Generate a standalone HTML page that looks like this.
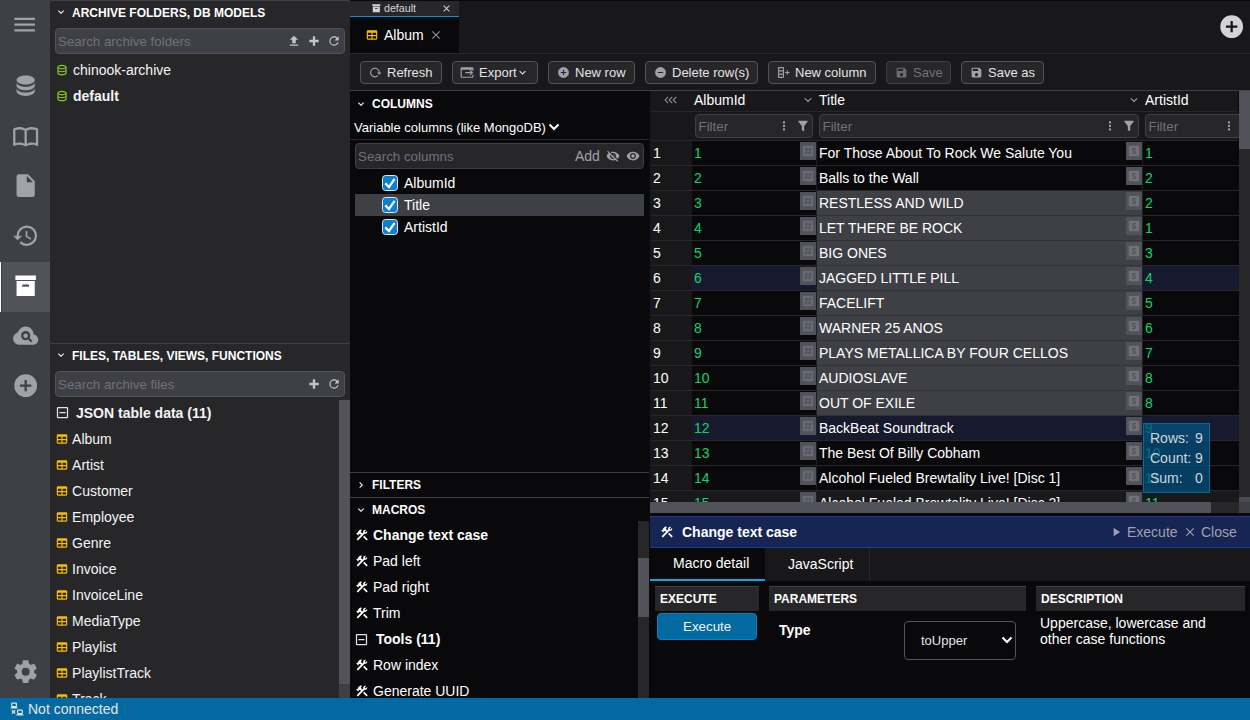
<!DOCTYPE html>
<html><head><meta charset="utf-8"><title>DbGate</title>
<style>
*{box-sizing:border-box;margin:0;padding:0}
html,body{width:1250px;height:720px;overflow:hidden;background:#09090b;color:#f4f4f5;font-family:"Liberation Sans",sans-serif;font-size:14px}
.a{position:absolute}
svg{display:block;position:absolute}
svg path{fill:currentColor}
#iconbar{left:0;top:0;width:50px;height:698px;background:#3f3f46;color:#a1a1aa}
#iconbar svg{width:27.33px;height:27.33px;left:12px}
#lp{left:50px;top:0;width:300px;height:698px;background:#27272a;overflow:hidden}
#status{left:0;top:698px;width:1250px;height:22px;background:#0369a1;color:#e4e4e7}
.wt svg{color:#fff}.wt{left:0;width:300px;height:25px;font-weight:bold;font-size:12px;color:#fff;text-transform:uppercase}
.wt span{position:absolute;left:22px;top:5.2px;white-space:nowrap}
.sb{left:5px;width:290px;height:26px;background:#3f3f46;border:1px solid #52525b;border-radius:4px;color:#71717a}
.sb span{position:absolute;left:2px;top:4.5px;white-space:nowrap;font-size:13.33px}
.ti{left:0;width:300px;height:26px;white-space:nowrap}
.ti span{position:absolute;left:23px;top:5px}
.t{white-space:nowrap}
</style></head><body>
<div class="a" id="iconbar">
<svg viewBox="0 0 24 24" style="top:10.8px;left:11.2px"><path d="M3,6H21V8H3V6M3,11H21V13H3V11M3,16H21V18H3V16Z"/></svg>
<svg viewBox="0 0 24 24" style="top:72.3px"><path d="M12,3C7.58,3 4,4.79 4,7C4,9.21 7.58,11 12,11C16.42,11 20,9.21 20,7C20,4.79 16.42,3 12,3M4,9V12C4,14.21 7.58,16 12,16C16.42,16 20,14.21 20,12V9C20,11.21 16.42,13 12,13C7.58,13 4,11.21 4,9M4,14V17C4,19.21 7.58,21 12,21C16.42,21 20,19.21 20,17V14C20,16.21 16.42,18 12,18C7.58,18 4,16.21 4,14Z"/></svg>
<svg viewBox="0 0 24 24" style="top:122.3px"><path d="M12 21.5C10.65 20.65 8.2 20 6.5 20C4.85 20 3.15 20.3 1.75 21.05C1.65 21.1 1.6 21.1 1.5 21.1C1.25 21.1 1 20.85 1 20.6V6C1.6 5.55 2.25 5.25 3 5C4.11 4.65 5.33 4.5 6.5 4.5C8.45 4.5 10.55 4.9 12 6C13.45 4.9 15.55 4.5 17.5 4.5C18.67 4.5 19.89 4.65 21 5C21.75 5.25 22.4 5.55 23 6V20.6C23 20.85 22.75 21.1 22.5 21.1C22.4 21.1 22.35 21.1 22.25 21.05C20.85 20.3 19.15 20 17.5 20C15.8 20 13.35 20.65 12 21.5M11 7.5C9.64 6.9 7.84 6.5 6.5 6.5C5.3 6.5 4.1 6.65 3 7V18.5C4.1 18.15 5.3 18 6.5 18C7.84 18 9.64 18.4 11 19V7.5M13 19C14.36 18.4 16.16 18 17.5 18C18.7 18 19.9 18.15 21 18.5V7C19.9 6.65 18.7 6.5 17.5 6.5C16.16 6.5 14.36 6.9 13 7.5V19Z"/></svg>
<svg viewBox="0 0 24 24" style="top:172.3px"><path d="M13,9V3.5L18.5,9M6,2C4.89,2 4,2.89 4,4V20A2,2 0 0,0 6,22H18A2,2 0 0,0 20,20V8L14,2H6Z"/></svg>
<svg viewBox="0 0 24 24" style="top:222.3px"><path d="M13.5,8H12V13L16.28,15.54L17,14.33L13.5,12.25V8M13,3A9,9 0 0,0 4,12H1L4.96,16.03L9,12H6A7,7 0 0,1 13,5A7,7 0 0,1 20,12A7,7 0 0,1 13,19C11.07,19 9.32,18.21 8.06,16.94L6.64,18.36C8.27,20 10.5,21 13,21A9,9 0 0,0 22,12A9,9 0 0,0 13,3"/></svg>
<div class="a" style="left:2px;top:262px;width:48px;height:50px;background:#52525b"></div><div class="a" style="left:0;top:262px;width:1px;height:50px;background:#fff"></div>
<svg viewBox="0 0 24 24" style="top:272.3px;color:#fff"><path d="M3,3H21V7H3V3M4,8H20V21H4V8M9.5,11A0.5,0.5 0 0,0 9,11.5V13H15V11.5A0.5,0.5 0 0,0 14.5,11H9.5Z"/></svg>
<svg viewBox="0 0 24 24" style="top:322.3px"><path d="M21.86 12.5C21.1 11.63 20.15 11.13 19 11C19 9.05 18.32 7.4 16.96 6.04C15.6 4.68 13.95 4 12 4C10.42 4 9 4.47 7.75 5.43S5.67 7.62 5.25 9.15C4 9.43 2.96 10.08 2.17 11.1S1 13.28 1 14.58C1 16.09 1.54 17.38 2.61 18.43C3.69 19.5 5 20 6.5 20H18.5C19.75 20 20.81 19.56 21.69 18.69C22.56 17.81 23 16.75 23 15.5C23 14.35 22.62 13.35 21.86 12.5M16.57 18L14 15.43C13.43 15.79 12.74 16 12 16C9.79 16 8 14.21 8 12S9.79 8 12 8 16 9.79 16 12C16 12.74 15.79 13.43 15.43 14L18 16.57L16.57 18M14 12C14 13.11 13.11 14 12 14S10 13.11 10 12 10.9 10 12 10 14 10.9 14 12Z"/></svg>
<svg viewBox="0 0 24 24" style="top:372.3px"><path d="M17,13H13V17H11V13H7V11H11V7H13V11H17M12,2A10,10 0 0,0 2,12A10,10 0 0,0 12,22A10,10 0 0,0 22,12A10,10 0 0,0 12,2Z"/></svg>
<svg viewBox="0 0 24 24" style="top:658.4px;left:11.8px"><path d="M12,15.5A3.5,3.5 0 0,1 8.5,12A3.5,3.5 0 0,1 12,8.5A3.5,3.5 0 0,1 15.5,12A3.5,3.5 0 0,1 12,15.5M19.43,12.97C19.47,12.65 19.5,12.33 19.5,12C19.5,11.67 19.47,11.34 19.43,11L21.54,9.37C21.73,9.22 21.78,8.95 21.66,8.73L19.66,5.27C19.54,5.05 19.27,4.96 19.05,5.05L16.56,6.05C16.04,5.66 15.5,5.32 14.87,5.07L14.5,2.42C14.46,2.18 14.25,2 14,2H10C9.75,2 9.54,2.18 9.5,2.42L9.13,5.07C8.5,5.32 7.96,5.66 7.44,6.05L4.95,5.05C4.73,4.96 4.46,5.05 4.34,5.27L2.34,8.73C2.21,8.95 2.27,9.22 2.46,9.37L4.57,11C4.53,11.34 4.5,11.67 4.5,12C4.5,12.33 4.53,12.65 4.57,12.97L2.46,14.63C2.27,14.78 2.21,15.05 2.34,15.27L4.34,18.73C4.46,18.95 4.73,19.03 4.95,18.95L7.44,17.94C7.96,18.34 8.5,18.68 9.13,18.93L9.5,21.58C9.54,21.82 9.75,22 10,22H14C14.25,22 14.46,21.82 14.5,21.58L14.87,18.93C15.5,18.67 16.04,18.34 16.56,17.94L19.05,18.95C19.27,19.03 19.54,18.95 19.66,18.73L21.66,15.27C21.78,15.05 21.73,14.78 21.54,14.63L19.43,12.97Z"/></svg>
</div>
<div class="a" id="lp">
<div class="a wt" style="top:0;border-top:1px solid #3f3f46"><svg viewBox="0 0 24 24" style="left:5px;top:5.1px;width:12px;height:12px"><path d="M7.41,8.58L12,13.17L16.59,8.58L18,10L12,16L6,10L7.41,8.58Z"/></svg><span>Archive folders, DB models</span></div>
<div class="a sb" style="top:28px"><span>Search archive folders</span><svg viewBox="0 0 24 24" style="left:231px;top:5px;width:14px;height:14px;color:#c4c4cc"><path d="M9,16V10H5L12,3L19,10H15V16H9M5,20V18H19V20H5Z"/></svg><svg viewBox="0 0 24 24" style="left:251px;top:5px;width:14px;height:14px;color:#c4c4cc"><path d="M20 14H14V20H10V14H4V10H10V4H14V10H20V14Z"/></svg><svg viewBox="0 0 24 24" style="left:271px;top:5px;width:14px;height:14px;color:#c4c4cc"><path d="M17.65,6.35C16.2,4.9 14.21,4 12,4A8,8 0 0,0 4,12A8,8 0 0,0 12,20C15.73,20 18.84,17.45 19.73,14H17.65C16.83,16.33 14.61,18 12,18A6,6 0 0,1 6,12A6,6 0 0,1 12,6C13.66,6 15.14,6.69 16.22,7.78L13,11H20V4L17.65,6.35Z"/></svg></div>
<div class="a ti" style="top:57px"><svg viewBox="0 0 24 24" style="left:4.6px;top:6px;width:14px;height:14px;color:#84cc16"><path d="M12 3C7.58 3 4 4.79 4 7V17C4 19.21 7.59 21 12 21S20 19.21 20 17V7C20 4.79 16.42 3 12 3M18 17C18 17.5 15.87 19 12 19S6 17.5 6 17V14.77C7.61 15.55 9.72 16 12 16S16.39 15.55 18 14.77V17M18 12.45C16.7 13.4 14.42 14 12 14C9.58 14 7.3 13.4 6 12.45V9.64C7.47 10.47 9.61 11 12 11C14.39 11 16.53 10.47 18 9.64V12.45M12 9C8.13 9 6 7.5 6 7S8.13 5 12 5C15.87 5 18 6.5 18 7S15.87 9 12 9Z"/></svg><span>chinook-archive</span></div>
<div class="a ti" style="top:83px;font-weight:bold"><svg viewBox="0 0 24 24" style="left:4.6px;top:6px;width:14px;height:14px;color:#84cc16"><path d="M12 3C7.58 3 4 4.79 4 7V17C4 19.21 7.59 21 12 21S20 19.21 20 17V7C20 4.79 16.42 3 12 3M18 17C18 17.5 15.87 19 12 19S6 17.5 6 17V14.77C7.61 15.55 9.72 16 12 16S16.39 15.55 18 14.77V17M18 12.45C16.7 13.4 14.42 14 12 14C9.58 14 7.3 13.4 6 12.45V9.64C7.47 10.47 9.61 11 12 11C14.39 11 16.53 10.47 18 9.64V12.45M12 9C8.13 9 6 7.5 6 7S8.13 5 12 5C15.87 5 18 6.5 18 7S15.87 9 12 9Z"/></svg><span>default</span></div>
<div class="a wt" style="top:343px;border-top:1px solid #3f3f46"><svg viewBox="0 0 24 24" style="left:5px;top:5.1px;width:12px;height:12px"><path d="M7.41,8.58L12,13.17L16.59,8.58L18,10L12,16L6,10L7.41,8.58Z"/></svg><span>Files, tables, views, functions</span></div>
<div class="a sb" style="top:371px"><span>Search archive files</span><svg viewBox="0 0 24 24" style="left:251px;top:5px;width:14px;height:14px;color:#c4c4cc"><path d="M20 14H14V20H10V14H4V10H10V4H14V10H20V14Z"/></svg><svg viewBox="0 0 24 24" style="left:271px;top:5px;width:14px;height:14px;color:#c4c4cc"><path d="M17.65,6.35C16.2,4.9 14.21,4 12,4A8,8 0 0,0 4,12A8,8 0 0,0 12,20C15.73,20 18.84,17.45 19.73,14H17.65C16.83,16.33 14.61,18 12,18A6,6 0 0,1 6,12A6,6 0 0,1 12,6C13.66,6 15.14,6.69 16.22,7.78L13,11H20V4L17.65,6.35Z"/></svg></div>
<div class="a ti" style="top:400px;font-weight:bold"><svg viewBox="0 0 24 24" style="left:4.6px;top:5.3px;width:15px;height:15px;color:#e4e4e7"><path d="M19,19V5H5V19H19M19,3A2,2 0 0,1 21,5V19A2,2 0 0,1 19,21H5A2,2 0 0,1 3,19V5C3,3.89 3.9,3 5,3H19M17,11V13H7V11H17Z"/></svg><span style="left:26px">JSON table data (11)</span></div>
<div class="a ti" style="top:426px"><svg viewBox="0 0 24 24" style="left:4.6px;top:6px;width:14px;height:14px;color:#fbbc05"><path d="M5,4H19A2,2 0 0,1 21,6V18A2,2 0 0,1 19,20H5A2,2 0 0,1 3,18V6A2,2 0 0,1 5,4M5,8V12H11V8H5M13,8V12H19V8H13M5,14V18H11V14H5M13,14V18H19V14H13Z"/></svg><span style="left:22.1px">Album</span></div>
<div class="a ti" style="top:452px"><svg viewBox="0 0 24 24" style="left:4.6px;top:6px;width:14px;height:14px;color:#fbbc05"><path d="M5,4H19A2,2 0 0,1 21,6V18A2,2 0 0,1 19,20H5A2,2 0 0,1 3,18V6A2,2 0 0,1 5,4M5,8V12H11V8H5M13,8V12H19V8H13M5,14V18H11V14H5M13,14V18H19V14H13Z"/></svg><span style="left:22.1px">Artist</span></div>
<div class="a ti" style="top:478px"><svg viewBox="0 0 24 24" style="left:4.6px;top:6px;width:14px;height:14px;color:#fbbc05"><path d="M5,4H19A2,2 0 0,1 21,6V18A2,2 0 0,1 19,20H5A2,2 0 0,1 3,18V6A2,2 0 0,1 5,4M5,8V12H11V8H5M13,8V12H19V8H13M5,14V18H11V14H5M13,14V18H19V14H13Z"/></svg><span style="left:22.1px">Customer</span></div>
<div class="a ti" style="top:504px"><svg viewBox="0 0 24 24" style="left:4.6px;top:6px;width:14px;height:14px;color:#fbbc05"><path d="M5,4H19A2,2 0 0,1 21,6V18A2,2 0 0,1 19,20H5A2,2 0 0,1 3,18V6A2,2 0 0,1 5,4M5,8V12H11V8H5M13,8V12H19V8H13M5,14V18H11V14H5M13,14V18H19V14H13Z"/></svg><span style="left:22.1px">Employee</span></div>
<div class="a ti" style="top:530px"><svg viewBox="0 0 24 24" style="left:4.6px;top:6px;width:14px;height:14px;color:#fbbc05"><path d="M5,4H19A2,2 0 0,1 21,6V18A2,2 0 0,1 19,20H5A2,2 0 0,1 3,18V6A2,2 0 0,1 5,4M5,8V12H11V8H5M13,8V12H19V8H13M5,14V18H11V14H5M13,14V18H19V14H13Z"/></svg><span style="left:22.1px">Genre</span></div>
<div class="a ti" style="top:556px"><svg viewBox="0 0 24 24" style="left:4.6px;top:6px;width:14px;height:14px;color:#fbbc05"><path d="M5,4H19A2,2 0 0,1 21,6V18A2,2 0 0,1 19,20H5A2,2 0 0,1 3,18V6A2,2 0 0,1 5,4M5,8V12H11V8H5M13,8V12H19V8H13M5,14V18H11V14H5M13,14V18H19V14H13Z"/></svg><span style="left:22.1px">Invoice</span></div>
<div class="a ti" style="top:582px"><svg viewBox="0 0 24 24" style="left:4.6px;top:6px;width:14px;height:14px;color:#fbbc05"><path d="M5,4H19A2,2 0 0,1 21,6V18A2,2 0 0,1 19,20H5A2,2 0 0,1 3,18V6A2,2 0 0,1 5,4M5,8V12H11V8H5M13,8V12H19V8H13M5,14V18H11V14H5M13,14V18H19V14H13Z"/></svg><span style="left:22.1px">InvoiceLine</span></div>
<div class="a ti" style="top:608px"><svg viewBox="0 0 24 24" style="left:4.6px;top:6px;width:14px;height:14px;color:#fbbc05"><path d="M5,4H19A2,2 0 0,1 21,6V18A2,2 0 0,1 19,20H5A2,2 0 0,1 3,18V6A2,2 0 0,1 5,4M5,8V12H11V8H5M13,8V12H19V8H13M5,14V18H11V14H5M13,14V18H19V14H13Z"/></svg><span style="left:22.1px">MediaType</span></div>
<div class="a ti" style="top:634px"><svg viewBox="0 0 24 24" style="left:4.6px;top:6px;width:14px;height:14px;color:#fbbc05"><path d="M5,4H19A2,2 0 0,1 21,6V18A2,2 0 0,1 19,20H5A2,2 0 0,1 3,18V6A2,2 0 0,1 5,4M5,8V12H11V8H5M13,8V12H19V8H13M5,14V18H11V14H5M13,14V18H19V14H13Z"/></svg><span style="left:22.1px">Playlist</span></div>
<div class="a ti" style="top:660px"><svg viewBox="0 0 24 24" style="left:4.6px;top:6px;width:14px;height:14px;color:#fbbc05"><path d="M5,4H19A2,2 0 0,1 21,6V18A2,2 0 0,1 19,20H5A2,2 0 0,1 3,18V6A2,2 0 0,1 5,4M5,8V12H11V8H5M13,8V12H19V8H13M5,14V18H11V14H5M13,14V18H19V14H13Z"/></svg><span style="left:22.1px">PlaylistTrack</span></div>
<div class="a ti" style="top:686px"><svg viewBox="0 0 24 24" style="left:4.6px;top:6px;width:14px;height:14px;color:#fbbc05"><path d="M5,4H19A2,2 0 0,1 21,6V18A2,2 0 0,1 19,20H5A2,2 0 0,1 3,18V6A2,2 0 0,1 5,4M5,8V12H11V8H5M13,8V12H19V8H13M5,14V18H11V14H5M13,14V18H19V14H13Z"/></svg><span style="left:22.1px">Track</span></div>
<div class="a" style="left:289px;top:400px;width:11px;height:298px;background:#3f3f46"></div><div class="a" style="left:289px;top:400px;width:11px;height:284px;background:#52525b"></div>
</div>
<!--MAINSTART-->
<div class="a" style="left:350px;top:0px;width:900px;height:53px;background:#18181b;border-top:1px solid #09090b"></div>
<div class="a" style="left:350px;top:1px;width:109px;height:14.5px;background:#27272a"></div>
<div class="a" style="left:350px;top:15.6px;width:109px;height:1.5px;background:#0c8ee0"></div>
<svg viewBox="0 0 24 24" style="left:371.1px;top:3.2px;width:10.67px;height:10.67px;color:#d4d4d8"><path d="M3,3H21V7H3V3M4,8H20V21H4V8M9.5,11A0.5,0.5 0 0,0 9,11.5V13H15V11.5A0.5,0.5 0 0,0 14.5,11H9.5Z"/></svg>
<span class="a t" style="left:384px;top:2px;font-size:10.67px;color:#d4d4d8">default</span>
<svg viewBox="0 0 24 24" style="left:441.1px;top:2.5px;width:11px;height:11px;color:#d4d4d8"><path d="M19,6.41L17.59,5L12,10.59L6.41,5L5,6.41L10.59,12L5,17.59L6.41,19L12,13.41L17.59,19L19,17.59L13.41,12L19,6.41Z"/></svg>
<div class="a" style="left:350px;top:17px;width:109px;height:36px;background:#09090b"></div>
<svg viewBox="0 0 24 24" style="left:365px;top:28px;width:14px;height:14px;color:#fbbc05"><path d="M5,4H19A2,2 0 0,1 21,6V18A2,2 0 0,1 19,20H5A2,2 0 0,1 3,18V6A2,2 0 0,1 5,4M5,8V12H11V8H5M13,8V12H19V8H13M5,14V18H11V14H5M13,14V18H19V14H13Z"/></svg>
<span class="a t" style="left:384px;top:27px;color:#fff">Album</span>
<svg viewBox="0 0 24 24" style="left:428.8px;top:28px;width:14px;height:14px;color:#8e8e98"><path d="M19,6.41L17.59,5L12,10.59L6.41,5L5,6.41L10.59,12L5,17.59L6.41,19L12,13.41L17.59,19L19,17.59L13.41,12L19,6.41Z"/></svg>
<svg viewBox="0 0 24 24" style="left:1217.8px;top:12.6px;width:27.33px;height:27.33px;color:#d4d4d8"><path d="M17,13H13V17H11V13H7V11H11V7H13V11H17M12,2A10,10 0 0,0 2,12A10,10 0 0,0 12,22A10,10 0 0,0 22,12A10,10 0 0,0 12,2Z"/></svg>
<div class="a" style="left:350px;top:53px;width:900px;height:38px;background:#18181b;border-top:1px solid #27272a;border-bottom:1px solid #3f3f46"></div>
<div class="a" style="left:360px;top:61px;width:82px;height:23px;background:#27272a;border:1px solid #52525b;border-radius:4px"></div><svg viewBox="0 0 24 24" style="left:368.8px;top:66px;width:13px;height:13px;color:#a1a1aa"><path d="M2 12C2 16.97 6.03 21 11 21C13.39 21 15.68 20.06 17.4 18.4L15.9 16.9C14.63 18.25 12.86 19 11 19C4.76 19 1.64 11.46 6.05 7.05C10.46 2.64 18 5.77 18 12H15L19 16H19.1L23 12H20C20 7.03 15.97 3 11 3C6.03 3 2 7.03 2 12Z"/></svg><span class="a t" style="left:387px;top:65px;font-size:13px;color:#e4e4e7">Refresh</span>
<div class="a" style="left:452px;top:61px;width:86px;height:23px;background:#27272a;border:1px solid #52525b;border-radius:4px"></div><span class="a t" style="left:479px;top:65px;font-size:13px;color:#e4e4e7">Export</span>
<svg viewBox="0 0 24 24" style="left:460.4px;top:64.7px;width:14px;height:14px;color:#a1a1aa"><path d="M9 12H18.8L16.3 9.5L17.7 8.1L22.6 13L17.7 17.9L16.3 16.5L18.8 14H9V12M21 17.4V20H3V8H21V8.6L23 10.6V6C23 4.9 22.1 4 21 4H3C1.9 4 1 4.9 1 6V20C1 21.1 1.9 22 3 22H21C22.1 22 23 21.1 23 20V15.4L21 17.4Z"/></svg>
<svg viewBox="0 0 24 24" style="left:516.1px;top:65.5px;width:13px;height:13px;color:#e4e4e7"><path d="M7.41,8.58L12,13.17L16.59,8.58L18,10L12,16L6,10L7.41,8.58Z"/></svg>
<div class="a" style="left:548px;top:61px;width:87px;height:23px;background:#27272a;border:1px solid #52525b;border-radius:4px"></div><svg viewBox="0 0 24 24" style="left:556.8px;top:66px;width:13px;height:13px;color:#a1a1aa"><path d="M17,13H13V17H11V13H7V11H11V7H13V11H17M12,2A10,10 0 0,0 2,12A10,10 0 0,0 12,22A10,10 0 0,0 22,12A10,10 0 0,0 12,2Z"/></svg><span class="a t" style="left:575px;top:65px;font-size:13px;color:#e4e4e7">New row</span>
<div class="a" style="left:645px;top:61px;width:113px;height:23px;background:#27272a;border:1px solid #52525b;border-radius:4px"></div><svg viewBox="0 0 24 24" style="left:653.8px;top:66px;width:13px;height:13px;color:#a1a1aa"><path d="M17,13H7V11H17M12,2A10,10 0 0,0 2,12A10,10 0 0,0 12,22A10,10 0 0,0 22,12A10,10 0 0,0 12,2Z"/></svg><span class="a t" style="left:672px;top:65px;font-size:13px;color:#e4e4e7">Delete row(s)</span>
<div class="a" style="left:768px;top:61px;width:108px;height:23px;background:#27272a;border:1px solid #52525b;border-radius:4px"></div><svg viewBox="0 0 24 24" style="left:776.8px;top:66px;width:13px;height:13px;color:#a1a1aa"><path d="M11,2A2,2 0 0,1 13,4V20A2,2 0 0,1 11,22H2V2H11M4,10V14H11V10H4M4,16V20H11V16H4M4,4V8H11V4H4M15,11H18V8H20V11H23V13H20V16H18V13H15V11Z"/></svg><span class="a t" style="left:795px;top:65px;font-size:13px;color:#e4e4e7">New column</span>
<div class="a" style="left:886px;top:61px;width:65px;height:23px;background:#27272a;border:1px solid #3f3f46;border-radius:4px"></div><svg viewBox="0 0 24 24" style="left:894.8px;top:66px;width:13px;height:13px;color:#6b6b75"><path d="M15,9H5V5H15M12,19A3,3 0 0,1 9,16A3,3 0 0,1 12,13A3,3 0 0,1 15,16A3,3 0 0,1 12,19M17,3H5C3.89,3 3,3.9 3,5V19A2,2 0 0,0 5,21H19A2,2 0 0,0 21,19V7L17,3Z"/></svg><span class="a t" style="left:913px;top:65px;font-size:13px;color:#71717a">Save</span>
<div class="a" style="left:961px;top:61px;width:83px;height:23px;background:#27272a;border:1px solid #52525b;border-radius:4px"></div><svg viewBox="0 0 24 24" style="left:969.8px;top:66px;width:13px;height:13px;color:#a1a1aa"><path d="M15,9H5V5H15M12,19A3,3 0 0,1 9,16A3,3 0 0,1 12,13A3,3 0 0,1 15,16A3,3 0 0,1 12,19M17,3H5C3.89,3 3,3.9 3,5V19A2,2 0 0,0 5,21H19A2,2 0 0,0 21,19V7L17,3Z"/></svg><span class="a t" style="left:988px;top:65px;font-size:13px;color:#e4e4e7">Save as</span>
<svg viewBox="0 0 24 24" style="left:355px;top:97.5px;width:12px;height:12px;color:#fff"><path d="M7.41,8.58L12,13.17L16.59,8.58L18,10L12,16L6,10L7.41,8.58Z"/></svg>
<span class="a t" style="left:372px;top:97px;font-size:12px;font-weight:bold;color:#fff">COLUMNS</span>
<span class="a t" style="left:354px;top:120px;font-size:13px;color:#fff">Variable columns (like MongoDB)</span>
<svg viewBox="0 0 12 8" style="left:548.2px;top:123px;width:12px;height:8px"><polyline points="1.5,1.5 6,6 10.5,1.5" style="fill:none;stroke:#fff;stroke-width:2"/></svg>
<div class="a" style="left:350px;top:139px;width:299px;height:1px;background:#27272a"></div>
<div class="a" style="left:355px;top:143px;width:289px;height:26px;background:#27272a;border:1px solid #3f3f46;border-radius:4px"></div>
<span class="a t" style="left:358px;top:149px;font-size:13.33px;color:#71717a">Search columns</span>
<span class="a t" style="left:575px;top:147.5px;font-size:14px;color:#a1a1aa">Add</span>
<svg viewBox="0 0 24 24" style="left:605.8px;top:149px;width:14px;height:14px;color:#a1a1aa"><path d="M11.83,9L15,12.16C15,12.11 15,12.05 15,12A3,3 0 0,0 12,9C11.94,9 11.89,9 11.83,9M7.53,9.8L9.08,11.35C9.03,11.56 9,11.77 9,12A3,3 0 0,0 12,15C12.22,15 12.44,14.97 12.65,14.92L14.2,16.47C13.53,16.8 12.79,17 12,17A5,5 0 0,1 7,12C7,11.21 7.2,10.47 7.53,9.8M2,4.27L4.28,6.55L4.73,7C3.08,8.3 1.78,10 1,12C2.73,16.39 7,19.5 12,19.5C13.55,19.5 15.03,19.2 16.38,18.66L16.81,19.08L19.73,22L21,20.73L3.27,3M12,7A5,5 0 0,1 17,12C17,12.64 16.87,13.26 16.64,13.82L19.57,16.75C21.07,15.5 22.27,13.86 23,12C21.27,7.61 17,4.5 12,4.5C10.6,4.5 9.26,4.75 8,5.2L10.17,7.35C10.74,7.13 11.35,7 12,7Z"/></svg>
<svg viewBox="0 0 24 24" style="left:626.1px;top:149px;width:14px;height:14px;color:#a1a1aa"><path d="M12,9A3,3 0 0,0 9,12A3,3 0 0,0 12,15A3,3 0 0,0 15,12A3,3 0 0,0 12,9M12,17A5,5 0 0,1 7,12A5,5 0 0,1 12,7A5,5 0 0,1 17,12A5,5 0 0,1 12,17M12,4.5C7,4.5 2.73,7.61 1,12C2.73,16.39 7,19.5 12,19.5C17,19.5 21.27,16.39 23,12C21.27,7.61 17,4.5 12,4.5Z"/></svg>
<div class="a" style="left:355px;top:194px;width:289px;height:22px;background:#3f3f46"></div>
<div class="a" style="left:382px;top:175px;width:16px;height:16px;background:#0c80d0;border:1.3px solid #e4e4e7;border-radius:3.5px"><svg viewBox="0 0 16 16" style="left:-1.3px;top:-1.3px;width:16px;height:16px"><polyline points="3.3,8.4 7,12.1 12.6,3.8" style="fill:none;stroke:#fff;stroke-width:2.2"/></svg></div>
<span class="a t" style="left:404px;top:175px;color:#fff">AlbumId</span>
<div class="a" style="left:382px;top:197px;width:16px;height:16px;background:#0c80d0;border:1.3px solid #e4e4e7;border-radius:3.5px"><svg viewBox="0 0 16 16" style="left:-1.3px;top:-1.3px;width:16px;height:16px"><polyline points="3.3,8.4 7,12.1 12.6,3.8" style="fill:none;stroke:#fff;stroke-width:2.2"/></svg></div>
<span class="a t" style="left:404px;top:197px;color:#fff">Title</span>
<div class="a" style="left:382px;top:219px;width:16px;height:16px;background:#0c80d0;border:1.3px solid #e4e4e7;border-radius:3.5px"><svg viewBox="0 0 16 16" style="left:-1.3px;top:-1.3px;width:16px;height:16px"><polyline points="3.3,8.4 7,12.1 12.6,3.8" style="fill:none;stroke:#fff;stroke-width:2.2"/></svg></div>
<span class="a t" style="left:404px;top:219px;color:#fff">ArtistId</span>
<div class="a" style="left:350px;top:472px;width:299px;height:1px;background:#3f3f46"></div>
<svg viewBox="0 0 24 24" style="left:355px;top:478.5px;width:12px;height:12px;color:#fff"><path d="M8.59,16.58L13.17,12L8.59,7.41L10,6L16,12L10,18L8.59,16.58Z"/></svg>
<span class="a t" style="left:372px;top:478px;font-size:12px;font-weight:bold;color:#fff">FILTERS</span>
<div class="a" style="left:350px;top:497px;width:299px;height:1px;background:#3f3f46"></div>
<svg viewBox="0 0 24 24" style="left:355px;top:503.5px;width:12px;height:12px;color:#fff"><path d="M7.41,8.58L12,13.17L16.59,8.58L18,10L12,16L6,10L7.41,8.58Z"/></svg>
<span class="a t" style="left:372px;top:503px;font-size:12px;font-weight:bold;color:#fff">MACROS</span>
<svg viewBox="0 0 24 24" style="left:355.2px;top:528px;width:14px;height:14px;color:#fff"><path d="M13.78 15.3L19.78 21.3L21.89 19.14L15.89 13.14L13.78 15.3M17.5 10.1C17.11 10.1 16.69 10.05 16.36 9.91L4.97 21.25L2.86 19.14L10.27 11.74L8.5 9.96L7.78 10.66L6.33 9.25V12.11L5.63 12.81L2.11 9.25L2.81 8.55H5.62L4.22 7.14L7.78 3.58C8.95 2.41 10.83 2.41 12 3.58L9.89 5.74L11.3 7.14L10.59 7.85L12.38 9.63L14.2 7.75C14.06 7.42 14 7 14 6.63C14 4.66 15.56 3.11 17.5 3.11C18.09 3.11 18.61 3.25 19.08 3.53L16.41 6.2L17.91 7.7L20.58 5.03C20.86 5.5 21 6 21 6.63C21 8.55 19.45 10.1 17.5 10.1Z"/></svg>
<span class="a t" style="left:373px;top:527px;color:#fff;font-weight:bold">Change text case</span>
<svg viewBox="0 0 24 24" style="left:355.2px;top:554px;width:14px;height:14px;color:#fff"><path d="M13.78 15.3L19.78 21.3L21.89 19.14L15.89 13.14L13.78 15.3M17.5 10.1C17.11 10.1 16.69 10.05 16.36 9.91L4.97 21.25L2.86 19.14L10.27 11.74L8.5 9.96L7.78 10.66L6.33 9.25V12.11L5.63 12.81L2.11 9.25L2.81 8.55H5.62L4.22 7.14L7.78 3.58C8.95 2.41 10.83 2.41 12 3.58L9.89 5.74L11.3 7.14L10.59 7.85L12.38 9.63L14.2 7.75C14.06 7.42 14 7 14 6.63C14 4.66 15.56 3.11 17.5 3.11C18.09 3.11 18.61 3.25 19.08 3.53L16.41 6.2L17.91 7.7L20.58 5.03C20.86 5.5 21 6 21 6.63C21 8.55 19.45 10.1 17.5 10.1Z"/></svg>
<span class="a t" style="left:373px;top:553px;color:#fff">Pad left</span>
<svg viewBox="0 0 24 24" style="left:355.2px;top:580px;width:14px;height:14px;color:#fff"><path d="M13.78 15.3L19.78 21.3L21.89 19.14L15.89 13.14L13.78 15.3M17.5 10.1C17.11 10.1 16.69 10.05 16.36 9.91L4.97 21.25L2.86 19.14L10.27 11.74L8.5 9.96L7.78 10.66L6.33 9.25V12.11L5.63 12.81L2.11 9.25L2.81 8.55H5.62L4.22 7.14L7.78 3.58C8.95 2.41 10.83 2.41 12 3.58L9.89 5.74L11.3 7.14L10.59 7.85L12.38 9.63L14.2 7.75C14.06 7.42 14 7 14 6.63C14 4.66 15.56 3.11 17.5 3.11C18.09 3.11 18.61 3.25 19.08 3.53L16.41 6.2L17.91 7.7L20.58 5.03C20.86 5.5 21 6 21 6.63C21 8.55 19.45 10.1 17.5 10.1Z"/></svg>
<span class="a t" style="left:373px;top:579px;color:#fff">Pad right</span>
<svg viewBox="0 0 24 24" style="left:355.2px;top:606px;width:14px;height:14px;color:#fff"><path d="M13.78 15.3L19.78 21.3L21.89 19.14L15.89 13.14L13.78 15.3M17.5 10.1C17.11 10.1 16.69 10.05 16.36 9.91L4.97 21.25L2.86 19.14L10.27 11.74L8.5 9.96L7.78 10.66L6.33 9.25V12.11L5.63 12.81L2.11 9.25L2.81 8.55H5.62L4.22 7.14L7.78 3.58C8.95 2.41 10.83 2.41 12 3.58L9.89 5.74L11.3 7.14L10.59 7.85L12.38 9.63L14.2 7.75C14.06 7.42 14 7 14 6.63C14 4.66 15.56 3.11 17.5 3.11C18.09 3.11 18.61 3.25 19.08 3.53L16.41 6.2L17.91 7.7L20.58 5.03C20.86 5.5 21 6 21 6.63C21 8.55 19.45 10.1 17.5 10.1Z"/></svg>
<span class="a t" style="left:373px;top:605px;color:#fff">Trim</span>
<svg viewBox="0 0 24 24" style="left:354.2px;top:631.5px;width:15px;height:15px;color:#e4e4e7"><path d="M19,19V5H5V19H19M19,3A2,2 0 0,1 21,5V19A2,2 0 0,1 19,21H5A2,2 0 0,1 3,19V5C3,3.89 3.9,3 5,3H19M17,11V13H7V11H17Z"/></svg>
<span class="a t" style="left:376px;top:631px;font-weight:bold;color:#fff">Tools (11)</span>
<svg viewBox="0 0 24 24" style="left:355.2px;top:658px;width:14px;height:14px;color:#fff"><path d="M13.78 15.3L19.78 21.3L21.89 19.14L15.89 13.14L13.78 15.3M17.5 10.1C17.11 10.1 16.69 10.05 16.36 9.91L4.97 21.25L2.86 19.14L10.27 11.74L8.5 9.96L7.78 10.66L6.33 9.25V12.11L5.63 12.81L2.11 9.25L2.81 8.55H5.62L4.22 7.14L7.78 3.58C8.95 2.41 10.83 2.41 12 3.58L9.89 5.74L11.3 7.14L10.59 7.85L12.38 9.63L14.2 7.75C14.06 7.42 14 7 14 6.63C14 4.66 15.56 3.11 17.5 3.11C18.09 3.11 18.61 3.25 19.08 3.53L16.41 6.2L17.91 7.7L20.58 5.03C20.86 5.5 21 6 21 6.63C21 8.55 19.45 10.1 17.5 10.1Z"/></svg>
<span class="a t" style="left:373px;top:657px;color:#fff">Row index</span>
<svg viewBox="0 0 24 24" style="left:355.2px;top:684px;width:14px;height:14px;color:#fff"><path d="M13.78 15.3L19.78 21.3L21.89 19.14L15.89 13.14L13.78 15.3M17.5 10.1C17.11 10.1 16.69 10.05 16.36 9.91L4.97 21.25L2.86 19.14L10.27 11.74L8.5 9.96L7.78 10.66L6.33 9.25V12.11L5.63 12.81L2.11 9.25L2.81 8.55H5.62L4.22 7.14L7.78 3.58C8.95 2.41 10.83 2.41 12 3.58L9.89 5.74L11.3 7.14L10.59 7.85L12.38 9.63L14.2 7.75C14.06 7.42 14 7 14 6.63C14 4.66 15.56 3.11 17.5 3.11C18.09 3.11 18.61 3.25 19.08 3.53L16.41 6.2L17.91 7.7L20.58 5.03C20.86 5.5 21 6 21 6.63C21 8.55 19.45 10.1 17.5 10.1Z"/></svg>
<span class="a t" style="left:373px;top:683px;color:#fff">Generate UUID</span>
<div class="a" style="left:638px;top:521px;width:11px;height:177px;background:#27272a"></div>
<div class="a" style="left:638px;top:557.5px;width:11px;height:59.5px;background:#52525b"></div>
<div class="a" style="left:650px;top:91px;width:588px;height:21px;background:#18181b;border-bottom:1px solid #27272a"></div>
<div class="a" style="left:650px;top:112px;width:588px;height:29px;background:#18181b;border-bottom:1px solid #27272a"></div>
<svg viewBox="0 0 24 24" style="left:663.8px;top:92.6px;width:14px;height:14px;color:#8a8a94"><path d="M6.41,6L0.41,12L6.41,18L7.82,16.59L3.24,12L7.82,7.41L6.41,6M13.41,6L7.41,12L13.41,18L14.82,16.59L10.24,12L14.82,7.41L13.41,6M20.41,6L14.41,12L20.41,18L21.82,16.59L17.24,12L21.82,7.41L20.41,6Z"/></svg>
<span class="a t" style="left:694px;top:92px;color:#fff">AlbumId</span>
<svg viewBox="0 0 24 24" style="left:801.2px;top:93px;width:14px;height:14px;color:#a1a1aa"><path d="M7.41,8.58L12,13.17L16.59,8.58L18,10L12,16L6,10L7.41,8.58Z"/></svg>
<div class="a" style="left:695px;top:114px;width:118px;height:24px;background:#27272a;border:1px solid #3f3f46;border-radius:4px"></div>
<span class="a t" style="left:698.5px;top:119px;font-size:13.33px;color:#71717a">Filter</span>
<span class="a t" style="left:819px;top:92px;color:#fff">Title</span>
<svg viewBox="0 0 24 24" style="left:1126.9px;top:93px;width:14px;height:14px;color:#a1a1aa"><path d="M7.41,8.58L12,13.17L16.59,8.58L18,10L12,16L6,10L7.41,8.58Z"/></svg>
<div class="a" style="left:819px;top:114px;width:320px;height:24px;background:#27272a;border:1px solid #3f3f46;border-radius:4px"></div>
<span class="a t" style="left:822.5px;top:119px;font-size:13.33px;color:#71717a">Filter</span>
<span class="a t" style="left:1145px;top:92px;color:#fff">ArtistId</span>
<div class="a" style="left:1145px;top:114px;width:100px;height:24px;background:#27272a;border:1px solid #3f3f46;border-radius:4px"></div>
<span class="a t" style="left:1148.5px;top:119px;font-size:13.33px;color:#71717a">Filter</span>
<svg viewBox="0 0 24 24" style="left:777.4px;top:119px;width:14px;height:14px;color:#a1a1aa"><path d="M12,16A2,2 0 0,1 14,18A2,2 0 0,1 12,20A2,2 0 0,1 10,18A2,2 0 0,1 12,16M12,10A2,2 0 0,1 14,12A2,2 0 0,1 12,14A2,2 0 0,1 10,12A2,2 0 0,1 12,10M12,4A2,2 0 0,1 14,6A2,2 0 0,1 12,8A2,2 0 0,1 10,6A2,2 0 0,1 12,4Z"/></svg>
<svg viewBox="0 0 24 24" style="left:795.6px;top:119px;width:14px;height:14px;color:#a1a1aa"><path d="M14,12V19.88C14.04,20.18 13.94,20.5 13.71,20.71C13.32,21.1 12.69,21.1 12.3,20.71L10.29,18.7C10.06,18.47 9.96,18.16 10,17.87V12H9.97L4.21,4.62C3.87,4.19 3.95,3.56 4.38,3.22C4.57,3.08 4.78,3 5,3V3H19V3C19.22,3 19.43,3.08 19.62,3.22C20.05,3.56 20.13,4.19 19.79,4.62L14.03,12H14Z"/></svg>
<svg viewBox="0 0 24 24" style="left:1103.3px;top:119px;width:14px;height:14px;color:#a1a1aa"><path d="M12,16A2,2 0 0,1 14,18A2,2 0 0,1 12,20A2,2 0 0,1 10,18A2,2 0 0,1 12,16M12,10A2,2 0 0,1 14,12A2,2 0 0,1 12,14A2,2 0 0,1 10,12A2,2 0 0,1 12,10M12,4A2,2 0 0,1 14,6A2,2 0 0,1 12,8A2,2 0 0,1 10,6A2,2 0 0,1 12,4Z"/></svg>
<svg viewBox="0 0 24 24" style="left:1121.9px;top:119px;width:14px;height:14px;color:#a1a1aa"><path d="M14,12V19.88C14.04,20.18 13.94,20.5 13.71,20.71C13.32,21.1 12.69,21.1 12.3,20.71L10.29,18.7C10.06,18.47 9.96,18.16 10,17.87V12H9.97L4.21,4.62C3.87,4.19 3.95,3.56 4.38,3.22C4.57,3.08 4.78,3 5,3V3H19V3C19.22,3 19.43,3.08 19.62,3.22C20.05,3.56 20.13,4.19 19.79,4.62L14.03,12H14Z"/></svg>
<svg viewBox="0 0 24 24" style="left:1221.9px;top:119px;width:14px;height:14px;color:#a1a1aa"><path d="M12,16A2,2 0 0,1 14,18A2,2 0 0,1 12,20A2,2 0 0,1 10,18A2,2 0 0,1 12,16M12,10A2,2 0 0,1 14,12A2,2 0 0,1 12,14A2,2 0 0,1 10,12A2,2 0 0,1 12,10M12,4A2,2 0 0,1 14,6A2,2 0 0,1 12,8A2,2 0 0,1 10,6A2,2 0 0,1 12,4Z"/></svg>
<div class="a" style="left:650px;top:141px;width:42px;height:25px;background:#18181b;border-bottom:1px solid #27272a"></div>
<span class="a t" style="left:653px;top:145px;color:#fff">1</span>
<div class="a" style="left:692px;top:141px;width:125px;height:25px;background:#09090b;border-bottom:1px solid #27272a;border-right:1px solid #1f1f23"></div>
<span class="a t" style="left:694px;top:145px;color:#10d468">1</span>
<div class="a" style="left:800px;top:142px;width:16px;height:18px;background:#52525b"><svg viewBox="0 0 24 24" style="left:1px;top:1.6px;width:14px;height:14px;color:#6a6a74"><path d="M3,5A2,2 0 0,1 5,3H19A2,2 0 0,1 21,5V19A2,2 0 0,1 19,21H5C3.89,21 3,20.1 3,19V5M7,18H9L9.35,16H13.35L13,18H15L15.35,16H17.35L17.71,14H15.71L16.41,10H18.41L18.76,8H16.76L17.12,6H15.12L14.76,8H10.76L11.12,6H9.12L8.76,8H6.76L6.41,10H8.41L7.71,14H5.71L5.35,16H7.35L7,18M10.41,10H14.41L13.71,14H9.71L10.41,10Z"/></svg></div>
<div class="a" style="left:817px;top:141px;width:326px;height:25px;background:#09090b;border-bottom:1px solid #27272a;border-right:1px solid #1f1f23"></div>
<span class="a t" style="left:819px;top:145px;color:#fff">For Those About To Rock We Salute You</span>
<div class="a" style="left:1126px;top:142px;width:16px;height:18px;background:#52525b"><svg viewBox="0 0 24 24" style="left:0.9px;top:1.6px;width:14px;height:14px;color:#71717a"><path d="M11,7A2,2 0 0,0 9,9V11A2,2 0 0,0 11,13H13V15H9V17H13A2,2 0 0,0 15,15V13A2,2 0 0,0 13,11H11V9H15V7H11M5,3H19A2,2 0 0,1 21,5V19A2,2 0 0,1 19,21H5A2,2 0 0,1 3,19V5A2,2 0 0,1 5,3Z"/></svg></div>
<div class="a" style="left:1143px;top:141px;width:95.8px;height:25px;background:#09090b;border-bottom:1px solid #27272a"></div>
<span class="a t" style="left:1145px;top:145px;color:#10d468">1</span>
<div class="a" style="left:650px;top:166px;width:42px;height:25px;background:#18181b;border-bottom:1px solid #27272a"></div>
<span class="a t" style="left:653px;top:170px;color:#fff">2</span>
<div class="a" style="left:692px;top:166px;width:125px;height:25px;background:#09090b;border-bottom:1px solid #27272a;border-right:1px solid #1f1f23"></div>
<span class="a t" style="left:694px;top:170px;color:#10d468">2</span>
<div class="a" style="left:800px;top:167px;width:16px;height:18px;background:#52525b"><svg viewBox="0 0 24 24" style="left:1px;top:1.6px;width:14px;height:14px;color:#6a6a74"><path d="M3,5A2,2 0 0,1 5,3H19A2,2 0 0,1 21,5V19A2,2 0 0,1 19,21H5C3.89,21 3,20.1 3,19V5M7,18H9L9.35,16H13.35L13,18H15L15.35,16H17.35L17.71,14H15.71L16.41,10H18.41L18.76,8H16.76L17.12,6H15.12L14.76,8H10.76L11.12,6H9.12L8.76,8H6.76L6.41,10H8.41L7.71,14H5.71L5.35,16H7.35L7,18M10.41,10H14.41L13.71,14H9.71L10.41,10Z"/></svg></div>
<div class="a" style="left:817px;top:166px;width:326px;height:25px;background:#09090b;border-bottom:1px solid #27272a;border-right:1px solid #1f1f23"></div>
<span class="a t" style="left:819px;top:170px;color:#fff">Balls to the Wall</span>
<div class="a" style="left:1126px;top:167px;width:16px;height:18px;background:#52525b"><svg viewBox="0 0 24 24" style="left:0.9px;top:1.6px;width:14px;height:14px;color:#71717a"><path d="M11,7A2,2 0 0,0 9,9V11A2,2 0 0,0 11,13H13V15H9V17H13A2,2 0 0,0 15,15V13A2,2 0 0,0 13,11H11V9H15V7H11M5,3H19A2,2 0 0,1 21,5V19A2,2 0 0,1 19,21H5A2,2 0 0,1 3,19V5A2,2 0 0,1 5,3Z"/></svg></div>
<div class="a" style="left:1143px;top:166px;width:95.8px;height:25px;background:#09090b;border-bottom:1px solid #27272a"></div>
<span class="a t" style="left:1145px;top:170px;color:#10d468">2</span>
<div class="a" style="left:650px;top:191px;width:42px;height:25px;background:#18181b;border-bottom:1px solid #27272a"></div>
<span class="a t" style="left:653px;top:195px;color:#fff">3</span>
<div class="a" style="left:692px;top:191px;width:125px;height:25px;background:#09090b;border-bottom:1px solid #27272a;border-right:1px solid #1f1f23"></div>
<span class="a t" style="left:694px;top:195px;color:#10d468">3</span>
<div class="a" style="left:800px;top:192px;width:16px;height:18px;background:#52525b"><svg viewBox="0 0 24 24" style="left:1px;top:1.6px;width:14px;height:14px;color:#6a6a74"><path d="M3,5A2,2 0 0,1 5,3H19A2,2 0 0,1 21,5V19A2,2 0 0,1 19,21H5C3.89,21 3,20.1 3,19V5M7,18H9L9.35,16H13.35L13,18H15L15.35,16H17.35L17.71,14H15.71L16.41,10H18.41L18.76,8H16.76L17.12,6H15.12L14.76,8H10.76L11.12,6H9.12L8.76,8H6.76L6.41,10H8.41L7.71,14H5.71L5.35,16H7.35L7,18M10.41,10H14.41L13.71,14H9.71L10.41,10Z"/></svg></div>
<div class="a" style="left:817px;top:191px;width:326px;height:25px;background:#3f3f46;border-bottom:1px solid #323238;border-right:1px solid #1f1f23"></div>
<span class="a t" style="left:819px;top:195px;color:#fff">RESTLESS AND WILD</span>
<div class="a" style="left:1126px;top:192px;width:16px;height:18px;background:#52525b"><svg viewBox="0 0 24 24" style="left:0.9px;top:1.6px;width:14px;height:14px;color:#71717a"><path d="M11,7A2,2 0 0,0 9,9V11A2,2 0 0,0 11,13H13V15H9V17H13A2,2 0 0,0 15,15V13A2,2 0 0,0 13,11H11V9H15V7H11M5,3H19A2,2 0 0,1 21,5V19A2,2 0 0,1 19,21H5A2,2 0 0,1 3,19V5A2,2 0 0,1 5,3Z"/></svg></div>
<div class="a" style="left:1143px;top:191px;width:95.8px;height:25px;background:#09090b;border-bottom:1px solid #27272a"></div>
<span class="a t" style="left:1145px;top:195px;color:#10d468">2</span>
<div class="a" style="left:650px;top:216px;width:42px;height:25px;background:#18181b;border-bottom:1px solid #27272a"></div>
<span class="a t" style="left:653px;top:220px;color:#fff">4</span>
<div class="a" style="left:692px;top:216px;width:125px;height:25px;background:#09090b;border-bottom:1px solid #27272a;border-right:1px solid #1f1f23"></div>
<span class="a t" style="left:694px;top:220px;color:#10d468">4</span>
<div class="a" style="left:800px;top:217px;width:16px;height:18px;background:#52525b"><svg viewBox="0 0 24 24" style="left:1px;top:1.6px;width:14px;height:14px;color:#6a6a74"><path d="M3,5A2,2 0 0,1 5,3H19A2,2 0 0,1 21,5V19A2,2 0 0,1 19,21H5C3.89,21 3,20.1 3,19V5M7,18H9L9.35,16H13.35L13,18H15L15.35,16H17.35L17.71,14H15.71L16.41,10H18.41L18.76,8H16.76L17.12,6H15.12L14.76,8H10.76L11.12,6H9.12L8.76,8H6.76L6.41,10H8.41L7.71,14H5.71L5.35,16H7.35L7,18M10.41,10H14.41L13.71,14H9.71L10.41,10Z"/></svg></div>
<div class="a" style="left:817px;top:216px;width:326px;height:25px;background:#3f3f46;border-bottom:1px solid #323238;border-right:1px solid #1f1f23"></div>
<span class="a t" style="left:819px;top:220px;color:#fff">LET THERE BE ROCK</span>
<div class="a" style="left:1126px;top:217px;width:16px;height:18px;background:#52525b"><svg viewBox="0 0 24 24" style="left:0.9px;top:1.6px;width:14px;height:14px;color:#71717a"><path d="M11,7A2,2 0 0,0 9,9V11A2,2 0 0,0 11,13H13V15H9V17H13A2,2 0 0,0 15,15V13A2,2 0 0,0 13,11H11V9H15V7H11M5,3H19A2,2 0 0,1 21,5V19A2,2 0 0,1 19,21H5A2,2 0 0,1 3,19V5A2,2 0 0,1 5,3Z"/></svg></div>
<div class="a" style="left:1143px;top:216px;width:95.8px;height:25px;background:#09090b;border-bottom:1px solid #27272a"></div>
<span class="a t" style="left:1145px;top:220px;color:#10d468">1</span>
<div class="a" style="left:650px;top:241px;width:42px;height:25px;background:#18181b;border-bottom:1px solid #27272a"></div>
<span class="a t" style="left:653px;top:245px;color:#fff">5</span>
<div class="a" style="left:692px;top:241px;width:125px;height:25px;background:#09090b;border-bottom:1px solid #27272a;border-right:1px solid #1f1f23"></div>
<span class="a t" style="left:694px;top:245px;color:#10d468">5</span>
<div class="a" style="left:800px;top:242px;width:16px;height:18px;background:#52525b"><svg viewBox="0 0 24 24" style="left:1px;top:1.6px;width:14px;height:14px;color:#6a6a74"><path d="M3,5A2,2 0 0,1 5,3H19A2,2 0 0,1 21,5V19A2,2 0 0,1 19,21H5C3.89,21 3,20.1 3,19V5M7,18H9L9.35,16H13.35L13,18H15L15.35,16H17.35L17.71,14H15.71L16.41,10H18.41L18.76,8H16.76L17.12,6H15.12L14.76,8H10.76L11.12,6H9.12L8.76,8H6.76L6.41,10H8.41L7.71,14H5.71L5.35,16H7.35L7,18M10.41,10H14.41L13.71,14H9.71L10.41,10Z"/></svg></div>
<div class="a" style="left:817px;top:241px;width:326px;height:25px;background:#3f3f46;border-bottom:1px solid #323238;border-right:1px solid #1f1f23"></div>
<span class="a t" style="left:819px;top:245px;color:#fff">BIG ONES</span>
<div class="a" style="left:1126px;top:242px;width:16px;height:18px;background:#52525b"><svg viewBox="0 0 24 24" style="left:0.9px;top:1.6px;width:14px;height:14px;color:#71717a"><path d="M11,7A2,2 0 0,0 9,9V11A2,2 0 0,0 11,13H13V15H9V17H13A2,2 0 0,0 15,15V13A2,2 0 0,0 13,11H11V9H15V7H11M5,3H19A2,2 0 0,1 21,5V19A2,2 0 0,1 19,21H5A2,2 0 0,1 3,19V5A2,2 0 0,1 5,3Z"/></svg></div>
<div class="a" style="left:1143px;top:241px;width:95.8px;height:25px;background:#09090b;border-bottom:1px solid #27272a"></div>
<span class="a t" style="left:1145px;top:245px;color:#10d468">3</span>
<div class="a" style="left:650px;top:266px;width:42px;height:25px;background:#18181b;border-bottom:1px solid #27272a"></div>
<span class="a t" style="left:653px;top:270px;color:#fff">6</span>
<div class="a" style="left:692px;top:266px;width:125px;height:25px;background:#17192e;border-bottom:1px solid #27272a;border-right:1px solid #1f1f23"></div>
<span class="a t" style="left:694px;top:270px;color:#10d468">6</span>
<div class="a" style="left:800px;top:267px;width:16px;height:18px;background:#52525b"><svg viewBox="0 0 24 24" style="left:1px;top:1.6px;width:14px;height:14px;color:#6a6a74"><path d="M3,5A2,2 0 0,1 5,3H19A2,2 0 0,1 21,5V19A2,2 0 0,1 19,21H5C3.89,21 3,20.1 3,19V5M7,18H9L9.35,16H13.35L13,18H15L15.35,16H17.35L17.71,14H15.71L16.41,10H18.41L18.76,8H16.76L17.12,6H15.12L14.76,8H10.76L11.12,6H9.12L8.76,8H6.76L6.41,10H8.41L7.71,14H5.71L5.35,16H7.35L7,18M10.41,10H14.41L13.71,14H9.71L10.41,10Z"/></svg></div>
<div class="a" style="left:817px;top:266px;width:326px;height:25px;background:#3f3f46;border-bottom:1px solid #323238;border-right:1px solid #1f1f23"></div>
<span class="a t" style="left:819px;top:270px;color:#fff">JAGGED LITTLE PILL</span>
<div class="a" style="left:1126px;top:267px;width:16px;height:18px;background:#52525b"><svg viewBox="0 0 24 24" style="left:0.9px;top:1.6px;width:14px;height:14px;color:#71717a"><path d="M11,7A2,2 0 0,0 9,9V11A2,2 0 0,0 11,13H13V15H9V17H13A2,2 0 0,0 15,15V13A2,2 0 0,0 13,11H11V9H15V7H11M5,3H19A2,2 0 0,1 21,5V19A2,2 0 0,1 19,21H5A2,2 0 0,1 3,19V5A2,2 0 0,1 5,3Z"/></svg></div>
<div class="a" style="left:1143px;top:266px;width:95.8px;height:25px;background:#17192e;border-bottom:1px solid #27272a"></div>
<span class="a t" style="left:1145px;top:270px;color:#10d468">4</span>
<div class="a" style="left:650px;top:291px;width:42px;height:25px;background:#18181b;border-bottom:1px solid #27272a"></div>
<span class="a t" style="left:653px;top:295px;color:#fff">7</span>
<div class="a" style="left:692px;top:291px;width:125px;height:25px;background:#09090b;border-bottom:1px solid #27272a;border-right:1px solid #1f1f23"></div>
<span class="a t" style="left:694px;top:295px;color:#10d468">7</span>
<div class="a" style="left:800px;top:292px;width:16px;height:18px;background:#52525b"><svg viewBox="0 0 24 24" style="left:1px;top:1.6px;width:14px;height:14px;color:#6a6a74"><path d="M3,5A2,2 0 0,1 5,3H19A2,2 0 0,1 21,5V19A2,2 0 0,1 19,21H5C3.89,21 3,20.1 3,19V5M7,18H9L9.35,16H13.35L13,18H15L15.35,16H17.35L17.71,14H15.71L16.41,10H18.41L18.76,8H16.76L17.12,6H15.12L14.76,8H10.76L11.12,6H9.12L8.76,8H6.76L6.41,10H8.41L7.71,14H5.71L5.35,16H7.35L7,18M10.41,10H14.41L13.71,14H9.71L10.41,10Z"/></svg></div>
<div class="a" style="left:817px;top:291px;width:326px;height:25px;background:#3f3f46;border-bottom:1px solid #323238;border-right:1px solid #1f1f23"></div>
<span class="a t" style="left:819px;top:295px;color:#fff">FACELIFT</span>
<div class="a" style="left:1126px;top:292px;width:16px;height:18px;background:#52525b"><svg viewBox="0 0 24 24" style="left:0.9px;top:1.6px;width:14px;height:14px;color:#71717a"><path d="M11,7A2,2 0 0,0 9,9V11A2,2 0 0,0 11,13H13V15H9V17H13A2,2 0 0,0 15,15V13A2,2 0 0,0 13,11H11V9H15V7H11M5,3H19A2,2 0 0,1 21,5V19A2,2 0 0,1 19,21H5A2,2 0 0,1 3,19V5A2,2 0 0,1 5,3Z"/></svg></div>
<div class="a" style="left:1143px;top:291px;width:95.8px;height:25px;background:#09090b;border-bottom:1px solid #27272a"></div>
<span class="a t" style="left:1145px;top:295px;color:#10d468">5</span>
<div class="a" style="left:650px;top:316px;width:42px;height:25px;background:#18181b;border-bottom:1px solid #27272a"></div>
<span class="a t" style="left:653px;top:320px;color:#fff">8</span>
<div class="a" style="left:692px;top:316px;width:125px;height:25px;background:#09090b;border-bottom:1px solid #27272a;border-right:1px solid #1f1f23"></div>
<span class="a t" style="left:694px;top:320px;color:#10d468">8</span>
<div class="a" style="left:800px;top:317px;width:16px;height:18px;background:#52525b"><svg viewBox="0 0 24 24" style="left:1px;top:1.6px;width:14px;height:14px;color:#6a6a74"><path d="M3,5A2,2 0 0,1 5,3H19A2,2 0 0,1 21,5V19A2,2 0 0,1 19,21H5C3.89,21 3,20.1 3,19V5M7,18H9L9.35,16H13.35L13,18H15L15.35,16H17.35L17.71,14H15.71L16.41,10H18.41L18.76,8H16.76L17.12,6H15.12L14.76,8H10.76L11.12,6H9.12L8.76,8H6.76L6.41,10H8.41L7.71,14H5.71L5.35,16H7.35L7,18M10.41,10H14.41L13.71,14H9.71L10.41,10Z"/></svg></div>
<div class="a" style="left:817px;top:316px;width:326px;height:25px;background:#3f3f46;border-bottom:1px solid #323238;border-right:1px solid #1f1f23"></div>
<span class="a t" style="left:819px;top:320px;color:#fff">WARNER 25 ANOS</span>
<div class="a" style="left:1126px;top:317px;width:16px;height:18px;background:#52525b"><svg viewBox="0 0 24 24" style="left:0.9px;top:1.6px;width:14px;height:14px;color:#71717a"><path d="M11,7A2,2 0 0,0 9,9V11A2,2 0 0,0 11,13H13V15H9V17H13A2,2 0 0,0 15,15V13A2,2 0 0,0 13,11H11V9H15V7H11M5,3H19A2,2 0 0,1 21,5V19A2,2 0 0,1 19,21H5A2,2 0 0,1 3,19V5A2,2 0 0,1 5,3Z"/></svg></div>
<div class="a" style="left:1143px;top:316px;width:95.8px;height:25px;background:#09090b;border-bottom:1px solid #27272a"></div>
<span class="a t" style="left:1145px;top:320px;color:#10d468">6</span>
<div class="a" style="left:650px;top:341px;width:42px;height:25px;background:#18181b;border-bottom:1px solid #27272a"></div>
<span class="a t" style="left:653px;top:345px;color:#fff">9</span>
<div class="a" style="left:692px;top:341px;width:125px;height:25px;background:#09090b;border-bottom:1px solid #27272a;border-right:1px solid #1f1f23"></div>
<span class="a t" style="left:694px;top:345px;color:#10d468">9</span>
<div class="a" style="left:800px;top:342px;width:16px;height:18px;background:#52525b"><svg viewBox="0 0 24 24" style="left:1px;top:1.6px;width:14px;height:14px;color:#6a6a74"><path d="M3,5A2,2 0 0,1 5,3H19A2,2 0 0,1 21,5V19A2,2 0 0,1 19,21H5C3.89,21 3,20.1 3,19V5M7,18H9L9.35,16H13.35L13,18H15L15.35,16H17.35L17.71,14H15.71L16.41,10H18.41L18.76,8H16.76L17.12,6H15.12L14.76,8H10.76L11.12,6H9.12L8.76,8H6.76L6.41,10H8.41L7.71,14H5.71L5.35,16H7.35L7,18M10.41,10H14.41L13.71,14H9.71L10.41,10Z"/></svg></div>
<div class="a" style="left:817px;top:341px;width:326px;height:25px;background:#3f3f46;border-bottom:1px solid #323238;border-right:1px solid #1f1f23"></div>
<span class="a t" style="left:819px;top:345px;color:#fff">PLAYS METALLICA BY FOUR CELLOS</span>
<div class="a" style="left:1126px;top:342px;width:16px;height:18px;background:#52525b"><svg viewBox="0 0 24 24" style="left:0.9px;top:1.6px;width:14px;height:14px;color:#71717a"><path d="M11,7A2,2 0 0,0 9,9V11A2,2 0 0,0 11,13H13V15H9V17H13A2,2 0 0,0 15,15V13A2,2 0 0,0 13,11H11V9H15V7H11M5,3H19A2,2 0 0,1 21,5V19A2,2 0 0,1 19,21H5A2,2 0 0,1 3,19V5A2,2 0 0,1 5,3Z"/></svg></div>
<div class="a" style="left:1143px;top:341px;width:95.8px;height:25px;background:#09090b;border-bottom:1px solid #27272a"></div>
<span class="a t" style="left:1145px;top:345px;color:#10d468">7</span>
<div class="a" style="left:650px;top:366px;width:42px;height:25px;background:#18181b;border-bottom:1px solid #27272a"></div>
<span class="a t" style="left:653px;top:370px;color:#fff">10</span>
<div class="a" style="left:692px;top:366px;width:125px;height:25px;background:#09090b;border-bottom:1px solid #27272a;border-right:1px solid #1f1f23"></div>
<span class="a t" style="left:694px;top:370px;color:#10d468">10</span>
<div class="a" style="left:800px;top:367px;width:16px;height:18px;background:#52525b"><svg viewBox="0 0 24 24" style="left:1px;top:1.6px;width:14px;height:14px;color:#6a6a74"><path d="M3,5A2,2 0 0,1 5,3H19A2,2 0 0,1 21,5V19A2,2 0 0,1 19,21H5C3.89,21 3,20.1 3,19V5M7,18H9L9.35,16H13.35L13,18H15L15.35,16H17.35L17.71,14H15.71L16.41,10H18.41L18.76,8H16.76L17.12,6H15.12L14.76,8H10.76L11.12,6H9.12L8.76,8H6.76L6.41,10H8.41L7.71,14H5.71L5.35,16H7.35L7,18M10.41,10H14.41L13.71,14H9.71L10.41,10Z"/></svg></div>
<div class="a" style="left:817px;top:366px;width:326px;height:25px;background:#3f3f46;border-bottom:1px solid #323238;border-right:1px solid #1f1f23"></div>
<span class="a t" style="left:819px;top:370px;color:#fff">AUDIOSLAVE</span>
<div class="a" style="left:1126px;top:367px;width:16px;height:18px;background:#52525b"><svg viewBox="0 0 24 24" style="left:0.9px;top:1.6px;width:14px;height:14px;color:#71717a"><path d="M11,7A2,2 0 0,0 9,9V11A2,2 0 0,0 11,13H13V15H9V17H13A2,2 0 0,0 15,15V13A2,2 0 0,0 13,11H11V9H15V7H11M5,3H19A2,2 0 0,1 21,5V19A2,2 0 0,1 19,21H5A2,2 0 0,1 3,19V5A2,2 0 0,1 5,3Z"/></svg></div>
<div class="a" style="left:1143px;top:366px;width:95.8px;height:25px;background:#09090b;border-bottom:1px solid #27272a"></div>
<span class="a t" style="left:1145px;top:370px;color:#10d468">8</span>
<div class="a" style="left:650px;top:391px;width:42px;height:25px;background:#18181b;border-bottom:1px solid #27272a"></div>
<span class="a t" style="left:653px;top:395px;color:#fff">11</span>
<div class="a" style="left:692px;top:391px;width:125px;height:25px;background:#09090b;border-bottom:1px solid #27272a;border-right:1px solid #1f1f23"></div>
<span class="a t" style="left:694px;top:395px;color:#10d468">11</span>
<div class="a" style="left:800px;top:392px;width:16px;height:18px;background:#52525b"><svg viewBox="0 0 24 24" style="left:1px;top:1.6px;width:14px;height:14px;color:#6a6a74"><path d="M3,5A2,2 0 0,1 5,3H19A2,2 0 0,1 21,5V19A2,2 0 0,1 19,21H5C3.89,21 3,20.1 3,19V5M7,18H9L9.35,16H13.35L13,18H15L15.35,16H17.35L17.71,14H15.71L16.41,10H18.41L18.76,8H16.76L17.12,6H15.12L14.76,8H10.76L11.12,6H9.12L8.76,8H6.76L6.41,10H8.41L7.71,14H5.71L5.35,16H7.35L7,18M10.41,10H14.41L13.71,14H9.71L10.41,10Z"/></svg></div>
<div class="a" style="left:817px;top:391px;width:326px;height:25px;background:#3f3f46;border-bottom:1px solid #323238;border-right:1px solid #1f1f23"></div>
<span class="a t" style="left:819px;top:395px;color:#fff">OUT OF EXILE</span>
<div class="a" style="left:1126px;top:392px;width:16px;height:18px;background:#52525b"><svg viewBox="0 0 24 24" style="left:0.9px;top:1.6px;width:14px;height:14px;color:#71717a"><path d="M11,7A2,2 0 0,0 9,9V11A2,2 0 0,0 11,13H13V15H9V17H13A2,2 0 0,0 15,15V13A2,2 0 0,0 13,11H11V9H15V7H11M5,3H19A2,2 0 0,1 21,5V19A2,2 0 0,1 19,21H5A2,2 0 0,1 3,19V5A2,2 0 0,1 5,3Z"/></svg></div>
<div class="a" style="left:1143px;top:391px;width:95.8px;height:25px;background:#09090b;border-bottom:1px solid #27272a"></div>
<span class="a t" style="left:1145px;top:395px;color:#10d468">8</span>
<div class="a" style="left:650px;top:416px;width:42px;height:25px;background:#18181b;border-bottom:1px solid #27272a"></div>
<span class="a t" style="left:653px;top:420px;color:#fff">12</span>
<div class="a" style="left:692px;top:416px;width:125px;height:25px;background:#17192e;border-bottom:1px solid #27272a;border-right:1px solid #1f1f23"></div>
<span class="a t" style="left:694px;top:420px;color:#10d468">12</span>
<div class="a" style="left:800px;top:417px;width:16px;height:18px;background:#52525b"><svg viewBox="0 0 24 24" style="left:1px;top:1.6px;width:14px;height:14px;color:#6a6a74"><path d="M3,5A2,2 0 0,1 5,3H19A2,2 0 0,1 21,5V19A2,2 0 0,1 19,21H5C3.89,21 3,20.1 3,19V5M7,18H9L9.35,16H13.35L13,18H15L15.35,16H17.35L17.71,14H15.71L16.41,10H18.41L18.76,8H16.76L17.12,6H15.12L14.76,8H10.76L11.12,6H9.12L8.76,8H6.76L6.41,10H8.41L7.71,14H5.71L5.35,16H7.35L7,18M10.41,10H14.41L13.71,14H9.71L10.41,10Z"/></svg></div>
<div class="a" style="left:817px;top:416px;width:326px;height:25px;background:#17192e;border-bottom:1px solid #27272a;border-right:1px solid #1f1f23"></div>
<span class="a t" style="left:819px;top:420px;color:#fff">BackBeat Soundtrack</span>
<div class="a" style="left:1126px;top:417px;width:16px;height:18px;background:#52525b"><svg viewBox="0 0 24 24" style="left:0.9px;top:1.6px;width:14px;height:14px;color:#71717a"><path d="M11,7A2,2 0 0,0 9,9V11A2,2 0 0,0 11,13H13V15H9V17H13A2,2 0 0,0 15,15V13A2,2 0 0,0 13,11H11V9H15V7H11M5,3H19A2,2 0 0,1 21,5V19A2,2 0 0,1 19,21H5A2,2 0 0,1 3,19V5A2,2 0 0,1 5,3Z"/></svg></div>
<div class="a" style="left:1143px;top:416px;width:95.8px;height:25px;background:#17192e;border-bottom:1px solid #27272a"></div>
<span class="a t" style="left:1145px;top:420px;color:#10d468">9</span>
<div class="a" style="left:650px;top:441px;width:42px;height:25px;background:#18181b;border-bottom:1px solid #27272a"></div>
<span class="a t" style="left:653px;top:445px;color:#fff">13</span>
<div class="a" style="left:692px;top:441px;width:125px;height:25px;background:#09090b;border-bottom:1px solid #27272a;border-right:1px solid #1f1f23"></div>
<span class="a t" style="left:694px;top:445px;color:#10d468">13</span>
<div class="a" style="left:800px;top:442px;width:16px;height:18px;background:#52525b"><svg viewBox="0 0 24 24" style="left:1px;top:1.6px;width:14px;height:14px;color:#6a6a74"><path d="M3,5A2,2 0 0,1 5,3H19A2,2 0 0,1 21,5V19A2,2 0 0,1 19,21H5C3.89,21 3,20.1 3,19V5M7,18H9L9.35,16H13.35L13,18H15L15.35,16H17.35L17.71,14H15.71L16.41,10H18.41L18.76,8H16.76L17.12,6H15.12L14.76,8H10.76L11.12,6H9.12L8.76,8H6.76L6.41,10H8.41L7.71,14H5.71L5.35,16H7.35L7,18M10.41,10H14.41L13.71,14H9.71L10.41,10Z"/></svg></div>
<div class="a" style="left:817px;top:441px;width:326px;height:25px;background:#09090b;border-bottom:1px solid #27272a;border-right:1px solid #1f1f23"></div>
<span class="a t" style="left:819px;top:445px;color:#fff">The Best Of Billy Cobham</span>
<div class="a" style="left:1126px;top:442px;width:16px;height:18px;background:#52525b"><svg viewBox="0 0 24 24" style="left:0.9px;top:1.6px;width:14px;height:14px;color:#71717a"><path d="M11,7A2,2 0 0,0 9,9V11A2,2 0 0,0 11,13H13V15H9V17H13A2,2 0 0,0 15,15V13A2,2 0 0,0 13,11H11V9H15V7H11M5,3H19A2,2 0 0,1 21,5V19A2,2 0 0,1 19,21H5A2,2 0 0,1 3,19V5A2,2 0 0,1 5,3Z"/></svg></div>
<div class="a" style="left:1143px;top:441px;width:95.8px;height:25px;background:#09090b;border-bottom:1px solid #27272a"></div>
<span class="a t" style="left:1145px;top:445px;color:#10d468">10</span>
<div class="a" style="left:650px;top:466px;width:42px;height:25px;background:#18181b;border-bottom:1px solid #27272a"></div>
<span class="a t" style="left:653px;top:470px;color:#fff">14</span>
<div class="a" style="left:692px;top:466px;width:125px;height:25px;background:#09090b;border-bottom:1px solid #27272a;border-right:1px solid #1f1f23"></div>
<span class="a t" style="left:694px;top:470px;color:#10d468">14</span>
<div class="a" style="left:800px;top:467px;width:16px;height:18px;background:#52525b"><svg viewBox="0 0 24 24" style="left:1px;top:1.6px;width:14px;height:14px;color:#6a6a74"><path d="M3,5A2,2 0 0,1 5,3H19A2,2 0 0,1 21,5V19A2,2 0 0,1 19,21H5C3.89,21 3,20.1 3,19V5M7,18H9L9.35,16H13.35L13,18H15L15.35,16H17.35L17.71,14H15.71L16.41,10H18.41L18.76,8H16.76L17.12,6H15.12L14.76,8H10.76L11.12,6H9.12L8.76,8H6.76L6.41,10H8.41L7.71,14H5.71L5.35,16H7.35L7,18M10.41,10H14.41L13.71,14H9.71L10.41,10Z"/></svg></div>
<div class="a" style="left:817px;top:466px;width:326px;height:25px;background:#09090b;border-bottom:1px solid #27272a;border-right:1px solid #1f1f23"></div>
<span class="a t" style="left:819px;top:470px;color:#fff">Alcohol Fueled Brewtality Live! [Disc 1]</span>
<div class="a" style="left:1126px;top:467px;width:16px;height:18px;background:#52525b"><svg viewBox="0 0 24 24" style="left:0.9px;top:1.6px;width:14px;height:14px;color:#71717a"><path d="M11,7A2,2 0 0,0 9,9V11A2,2 0 0,0 11,13H13V15H9V17H13A2,2 0 0,0 15,15V13A2,2 0 0,0 13,11H11V9H15V7H11M5,3H19A2,2 0 0,1 21,5V19A2,2 0 0,1 19,21H5A2,2 0 0,1 3,19V5A2,2 0 0,1 5,3Z"/></svg></div>
<div class="a" style="left:1143px;top:466px;width:95.8px;height:25px;background:#09090b;border-bottom:1px solid #27272a"></div>
<span class="a t" style="left:1145px;top:470px;color:#10d468">11</span>
<div class="a" style="left:650px;top:491px;width:42px;height:25px;background:#18181b;border-bottom:1px solid #27272a"></div>
<span class="a t" style="left:653px;top:495px;color:#fff">15</span>
<div class="a" style="left:692px;top:491px;width:125px;height:25px;background:#19191c;border-bottom:1px solid #27272a;border-right:1px solid #1f1f23"></div>
<span class="a t" style="left:694px;top:495px;color:#10d468">15</span>
<div class="a" style="left:800px;top:492px;width:16px;height:18px;background:#52525b"><svg viewBox="0 0 24 24" style="left:1px;top:1.6px;width:14px;height:14px;color:#6a6a74"><path d="M3,5A2,2 0 0,1 5,3H19A2,2 0 0,1 21,5V19A2,2 0 0,1 19,21H5C3.89,21 3,20.1 3,19V5M7,18H9L9.35,16H13.35L13,18H15L15.35,16H17.35L17.71,14H15.71L16.41,10H18.41L18.76,8H16.76L17.12,6H15.12L14.76,8H10.76L11.12,6H9.12L8.76,8H6.76L6.41,10H8.41L7.71,14H5.71L5.35,16H7.35L7,18M10.41,10H14.41L13.71,14H9.71L10.41,10Z"/></svg></div>
<div class="a" style="left:817px;top:491px;width:326px;height:25px;background:#19191c;border-bottom:1px solid #27272a;border-right:1px solid #1f1f23"></div>
<span class="a t" style="left:819px;top:495px;color:#fff">Alcohol Fueled Brewtality Live! [Disc 2]</span>
<div class="a" style="left:1126px;top:492px;width:16px;height:18px;background:#52525b"><svg viewBox="0 0 24 24" style="left:0.9px;top:1.6px;width:14px;height:14px;color:#71717a"><path d="M11,7A2,2 0 0,0 9,9V11A2,2 0 0,0 11,13H13V15H9V17H13A2,2 0 0,0 15,15V13A2,2 0 0,0 13,11H11V9H15V7H11M5,3H19A2,2 0 0,1 21,5V19A2,2 0 0,1 19,21H5A2,2 0 0,1 3,19V5A2,2 0 0,1 5,3Z"/></svg></div>
<div class="a" style="left:1143px;top:491px;width:95.8px;height:25px;background:#19191c;border-bottom:1px solid #27272a"></div>
<span class="a t" style="left:1145px;top:495px;color:#10d468">11</span>
<div class="a" style="left:1238.8px;top:91px;width:11.2px;height:411px;background:#27272a"></div>
<div class="a" style="left:1238.8px;top:91px;width:11.2px;height:57.7px;background:#52525b"></div>
<div class="a" style="left:1238.8px;top:497px;width:11.2px;height:5px;background:#4b4b53"></div>
<div class="a" style="left:650px;top:502px;width:600px;height:11px;background:#27272a"></div>
<div class="a" style="left:650px;top:502px;width:560.8px;height:11px;background:#52525b"></div>
<div class="a" style="left:1238.8px;top:502px;width:11.2px;height:11px;background:#3f3f46"></div>
<div class="a" style="left:650px;top:513px;width:600px;height:3px;background:#09090b"></div>
<div class="a" style="left:1143px;top:423px;width:67px;height:70px;background:rgba(2,80,126,.76);border:1px solid rgba(10,110,170,.85)"></div>
<span class="a t" style="left:1150px;top:430px;color:#d4d4d8">Rows:</span>
<span class="a t" style="left:1195px;top:430px;color:#d4d4d8">9</span>
<span class="a t" style="left:1150px;top:450px;color:#d4d4d8">Count:</span>
<span class="a t" style="left:1195px;top:450px;color:#d4d4d8">9</span>
<span class="a t" style="left:1150px;top:470px;color:#d4d4d8">Sum:</span>
<span class="a t" style="left:1195px;top:470px;color:#d4d4d8">0</span>
<div class="a" style="left:650px;top:516px;width:600px;height:32px;background:#172554;border-top:1px solid #1e3a8a;border-bottom:1px solid #1e3a8a"></div>
<svg viewBox="0 0 24 24" style="left:660.2px;top:525px;width:14px;height:14px;color:#fff"><path d="M13.78 15.3L19.78 21.3L21.89 19.14L15.89 13.14L13.78 15.3M17.5 10.1C17.11 10.1 16.69 10.05 16.36 9.91L4.97 21.25L2.86 19.14L10.27 11.74L8.5 9.96L7.78 10.66L6.33 9.25V12.11L5.63 12.81L2.11 9.25L2.81 8.55H5.62L4.22 7.14L7.78 3.58C8.95 2.41 10.83 2.41 12 3.58L9.89 5.74L11.3 7.14L10.59 7.85L12.38 9.63L14.2 7.75C14.06 7.42 14 7 14 6.63C14 4.66 15.56 3.11 17.5 3.11C18.09 3.11 18.61 3.25 19.08 3.53L16.41 6.2L17.91 7.7L20.58 5.03C20.86 5.5 21 6 21 6.63C21 8.55 19.45 10.1 17.5 10.1Z"/></svg>
<span class="a t" style="left:682px;top:524px;font-weight:bold;color:#fff">Change text case</span>
<svg viewBox="0 0 24 24" style="left:1108.5px;top:525px;width:14px;height:14px;color:#a1a1aa"><path d="M8,5.14V19.14L19,12.14L8,5.14Z"/></svg>
<span class="a t" style="left:1127px;top:524px;color:#a1a1aa">Execute</span>
<svg viewBox="0 0 24 24" style="left:1183.2px;top:525px;width:14px;height:14px;color:#a1a1aa"><path d="M19,6.41L17.59,5L12,10.59L6.41,5L5,6.41L10.59,12L5,17.59L6.41,19L12,13.41L17.59,19L19,17.59L13.41,12L19,6.41Z"/></svg>
<span class="a t" style="left:1201px;top:524px;color:#a1a1aa">Close</span>
<div class="a" style="left:650px;top:548px;width:600px;height:33px;background:#18181b"></div>
<div class="a" style="left:650px;top:548px;width:115px;height:33px;background:#09090b"></div>
<div class="a" style="left:650px;top:578.7px;width:115px;height:2.6px;background:#0ea5e9"></div>
<span class="a t" style="left:673px;top:555px;color:#fff">Macro detail</span>
<span class="a t" style="left:788px;top:556px;color:#fff">JavaScript</span>
<div class="a" style="left:869px;top:548px;width:1px;height:33px;background:#27272a"></div>
<div class="a" style="left:655px;top:586px;width:104px;height:25px;background:#27272a;border-top:1px solid #3f3f46"></div>
<span class="a t" style="left:660px;top:592px;font-size:12px;font-weight:bold;color:#fff">EXECUTE</span>
<div class="a" style="left:769px;top:586px;width:257px;height:25px;background:#27272a;border-top:1px solid #3f3f46"></div>
<span class="a t" style="left:774px;top:592px;font-size:12px;font-weight:bold;color:#fff">PARAMETERS</span>
<div class="a" style="left:1036px;top:586px;width:209px;height:25px;background:#27272a;border-top:1px solid #3f3f46"></div>
<span class="a t" style="left:1041px;top:592px;font-size:12px;font-weight:bold;color:#fff">DESCRIPTION</span>
<div class="a" style="left:657px;top:613px;width:100px;height:27px;background:#0369a1;border:1px solid #0284c7;border-radius:4px"></div>
<span class="a t" style="left:683px;top:619px;font-size:13.33px;color:#f4f4f5">Execute</span>
<span class="a t" style="left:779px;top:621.6px;font-size:14px;font-weight:bold;color:#fff">Type</span>
<div class="a" style="left:904px;top:621px;width:112px;height:39px;background:#09090b;border:1px solid #52525b;border-radius:4px"></div>
<span class="a t" style="left:921px;top:633px;font-size:13px;color:#e4e4e7">toUpper</span>
<svg viewBox="0 0 12 8" style="left:1001px;top:636px;width:12px;height:8px"><polyline points="1.5,1.5 6,6 10.5,1.5" style="fill:none;stroke:#fff;stroke-width:2"/></svg>
<span class="a t" style="left:1040px;top:615px;color:#fff;line-height:16px">Uppercase, lowercase and<br>other case functions</span>
<!--MAINEND-->
<div class="a" id="status">
<svg viewBox="0 0 24 24" style="left:10px;top:3.5px;width:14px;height:14px"><path d="M4,1C2.89,1 2,1.89 2,3V7C2,8.11 2.89,9 4,9H1V11H13V9H10C11.11,9 12,8.11 12,7V3C12,1.89 11.11,1 10,1H4M4,3H10V7H4V3M14,13C12.89,13 12,13.89 12,15V19C12,20.11 12.89,21 14,21H11V23H23V21H20C21.11,21 22,20.11 22,19V15C22,13.89 21.11,13 20,13H14M3.88,13.46L2.46,14.88L4.59,17L2.46,19.12L3.88,20.54L6,18.41L8.12,20.54L9.54,19.12L7.41,17L9.54,14.88L8.12,13.46L6,15.59L3.88,13.46M14,15H20V19H14V15Z"/></svg>
<span class="a" style="left:28px;top:3px;white-space:nowrap">Not connected</span>
</div>
</body></html>
